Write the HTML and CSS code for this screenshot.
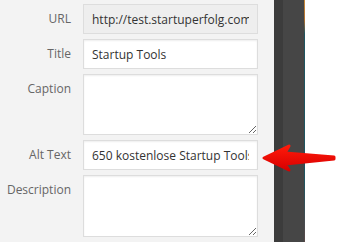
FILE: index.html
```html
<!DOCTYPE html>
<html lang="en">

<head>
    <meta charset="UTF-8">
    <meta name="viewport" content="width=device-width, initial-scale=1.0">
    <title>Attachment Details</title>
    <link rel="stylesheet" href="styles.css">
</head>

<body>

    <div class="screen">
        <div class="panel">
            <label class="row">
                <span class="name">URL</span>
                <input type="text" class="field readonly" value="http://test.startuperfolg.com/wp-content/uploads" readonly>
            </label>
            <label class="row">
                <span class="name">Title</span>
                <input type="text" class="field" value="Startup Tools">
            </label>
            <label class="row">
                <span class="name">Caption</span>
                <textarea class="field area caption"></textarea>
            </label>
            <label class="row">
                <span class="name">Alt Text</span>
                <input type="text" class="field" value="650 kostenlose Startup Tools">
            </label>
            <label class="row">
                <span class="name">Description</span>
                <textarea class="field area description"></textarea>
            </label>
        </div>
        <div class="sidebar">
            <div class="sidebar-inner"></div>
        </div>
        <div class="edge"></div>
        <div class="page"></div>
    </div>

    <svg class="arrow" width="80" height="34" viewBox="258 142 80 34">
        <defs>
            <linearGradient id="red" x1="0" y1="0" x2="0" y2="1">
                <stop offset="0" stop-color="#ff1a0a" />
                <stop offset="1" stop-color="#d80000" />
            </linearGradient>
        </defs>
        <path d="M264 158 L289 146 L285 153 L334 157 L334 159 L285 164 L289 170 Z"
            fill="url(#red)" stroke="url(#red)" stroke-width="3" stroke-linejoin="round" />
    </svg>

</body>

</html>
```

FILE: styles.css
```css
* {
    margin: 0;
    padding: 0;
    box-sizing: border-box;
}

html,
body {
    width: 100%;
    height: 100%;
    overflow: hidden;
    font-family: "Open Sans", Arial, sans-serif;
    background: #fff;
}

.screen {
    display: flex;
    height: 100%;
}

.panel {
    width: 274px;
    background: #f3f3f3;
    padding-top: 4px;
}

.row {
    display: flex;
    align-items: flex-start;
    margin-bottom: 5px;
}

.name {
    width: 83px;
    padding-right: 12px;
    padding-top: 7px;
    text-align: right;
    font-size: 12px;
    line-height: 16px;
    color: #666;
}

.field {
    width: 175px;
    height: 30px;
    padding: 0 8px;
    border: 1px solid #ddd;
    background: #fff;
    box-shadow: inset 0 1px 2px rgba(0, 0, 0, 0.07);
    font-family: "Open Sans", Arial, sans-serif;
    font-size: 12px;
    color: #333;
    outline: 0;
}

.readonly {
    background: #eee;
    box-shadow: none;
}

.area {
    padding: 6px 8px;
    resize: vertical;
}

.caption {
    height: 61px;
}

.description {
    height: 62px;
}

.sidebar {
    width: 30px;
    background: #3c3c3c;
    display: flex;
    justify-content: flex-end;
}

.sidebar-inner {
    width: 21px;
    background: #464646;
}

.edge {
    width: 1px;
    background: linear-gradient(#c98a3a 0, #b07030 20px, #1f5560 34px, #1f5560 75%, #5a4848 100%);
}

.page {
    flex: 1;
    background: #fff;
}

.arrow {
    position: absolute;
    left: 258px;
    top: 142px;
}
```
